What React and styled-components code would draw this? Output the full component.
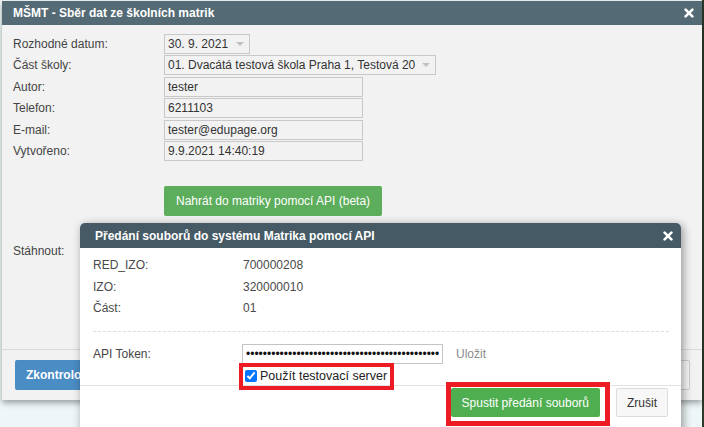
import React from "react";
import styled, { createGlobalStyle } from "styled-components";

const GlobalStyle = createGlobalStyle`
  html, body { margin: 0; padding: 0; }
  body {
    font-family: "Liberation Sans", Arial, sans-serif;
    font-size: 12px;
    background: #eef6f8;
  }
  * { box-sizing: border-box; }
`;

const Page = styled.div`
  position: relative;
  width: 704px;
  height: 427px;
  overflow: hidden;
  padding: 1px 0 0 2px;
  background: linear-gradient(to right, #eef6f8 0, #eef6f8 702px, #2c3a2a 702px);
`;

const OuterDialog = styled.div`
  width: 700px;
  height: 399px;
  display: flex;
  flex-direction: column;
  background: #f2f2f2;
  box-shadow: 0 3px 6px rgba(0, 0, 0, 0.35);
`;

const TitleBar = styled.div`
  height: ${(p) => p.$h}px;
  flex: none;
  display: flex;
  align-items: center;
  justify-content: space-between;
  padding: 0 ${(p) => p.$pr}px 0 ${(p) => p.$pl}px;
  background: ${(p) => p.$bg};
  color: #fff;
  font-weight: bold;
  font-size: 12px;
  border-radius: ${(p) => (p.$round ? "5px 5px 0 0" : "0")};
`;

const CloseIcon = styled.svg`
  width: 10px;
  height: 10px;
  display: block;
`;

const Close = () => (
  <CloseIcon viewBox="0 0 10 10">
    <path d="M1.6 1.6 L8.4 8.4 M8.4 1.6 L1.6 8.4" stroke="#fff" strokeWidth="2.6" strokeLinecap="round" />
  </CloseIcon>
);

const OuterBody = styled.div`
  flex: 1;
  padding: 8.5px 11px 0;
`;

const FormGrid = styled.div`
  display: grid;
  grid-template-columns: 151px auto;
  row-gap: 1.6px;
  align-items: center;
  justify-items: start;
`;

const Label = styled.div`
  color: #444;
  line-height: 20px;
  width: ${(p) => (p.$w ? `${p.$w}px` : "auto")};
  flex: none;
`;

const Field = styled.div`
  width: ${(p) => p.$w}px;
  height: 20px;
  border: 1px solid #c8c8c8;
  padding: 0 5px 0 3px;
  display: flex;
  align-items: center;
  justify-content: space-between;
  color: #333;
  white-space: nowrap;
`;

const Caret = styled.span`
  width: 0;
  height: 0;
  border-left: 4px solid transparent;
  border-right: 4px solid transparent;
  border-top: 4px solid #c2c2c2;
`;

const ButtonRow = styled.div`
  margin-top: 25px;
  padding-left: 151px;
`;

const Button = styled.button`
  height: ${(p) => p.$h || 30}px;
  padding: 0 ${(p) => p.$px || 11}px;
  border: 1px solid ${(p) => p.$border || "transparent"};
  border-radius: 2px;
  background: ${(p) => p.$bg};
  color: ${(p) => p.$color || "#fff"};
  font-family: "Liberation Sans", Arial, sans-serif;
  font-size: 12px;
  font-weight: ${(p) => (p.$bold ? "bold" : "normal")};
  white-space: nowrap;
  cursor: pointer;
`;

const DownloadRow = styled.div`
  margin-top: 25px;
  display: flex;
  align-items: center;
`;

const OuterFooter = styled.div`
  flex: none;
  height: 51px;
  border-top: 1px solid #dadada;
  padding: 0 12px 0 13px;
  display: flex;
  align-items: center;
  justify-content: space-between;
`;

const InnerDialog = styled.div`
  position: absolute;
  left: 80px;
  top: 223px;
  width: 601px;
  height: 230px;
  display: flex;
  flex-direction: column;
  background: #fff;
  border-radius: 5px 5px 0 0;
  box-shadow: 2px 2px 10px rgba(0, 0, 0, 0.4);
`;

const InnerBody = styled.div`
  height: 137px;
  flex: none;
  padding: 6.5px 12px 0 13px;
`;

const InfoGrid = styled.div`
  display: grid;
  grid-template-columns: 150px auto;
  grid-auto-rows: 21.5px;
  align-items: center;
  color: #4a4a4a;
`;

const Dashed = styled.div`
  margin-top: 11.5px;
  border-top: 1px dashed #dcdcdc;
`;

const TokenRow = styled.div`
  margin-top: 12px;
  display: flex;
  align-items: center;
`;

const TokenInput = styled.input`
  width: 201px;
  height: 20px;
  border: 1px solid #c4c4c4;
  padding: 0 3px;
  font-family: "Liberation Sans", Arial, sans-serif;
  font-size: 12px;
  color: #111;
  outline: none;
`;

const SaveLink = styled.span`
  margin-left: 13px;
  color: #8a8a8a;
`;

const CheckRow = styled.label`
  margin-top: 5px;
  padding-left: 152px;
  display: flex;
  align-items: center;
  gap: 3px;
  color: #222;
  font-size: 12.5px;
  height: 14px;
`;

const Check = styled.input`
  margin: 0;
  width: 12px;
  height: 12px;
`;

const InnerFooter = styled.div`
  border-top: 1px solid #e3e3e3;
  padding: 2px 13px 0;
  display: flex;
  justify-content: flex-end;
  gap: 16px;
`;

const Highlight = styled.div`
  position: absolute;
  left: ${(p) => p.$x}px;
  top: ${(p) => p.$y}px;
  width: ${(p) => p.$w}px;
  height: ${(p) => p.$h}px;
  border: ${(p) => p.$b}px solid #ed1c24;
  pointer-events: none;
`;

const formRows = [
  { label: "Rozhodné datum:", value: "30. 9. 2021", w: 86, select: true },
  { label: "Část školy:", value: "01. Dvacátá testová škola Praha 1, Testová 20", w: 272, select: true },
  { label: "Autor:", value: "tester", w: 199 },
  { label: "Telefon:", value: "6211103", w: 199 },
  { label: "E-mail:", value: "tester@edupage.org", w: 199 },
  { label: "Vytvořeno:", value: "9.9.2021 14:40:19", w: 199 },
];

const infoRows = [
  ["RED_IZO:", "700000208"],
  ["IZO:", "320000010"],
  ["Část:", "01"],
];

export default function App() {
  return (
    <>
      <GlobalStyle />
      <Page>
        <OuterDialog>
          <TitleBar $h={24} $pl={11} $pr={8} $bg="#546a74">
            <span>MŠMT - Sběr dat ze školních matrik</span>
            <Close />
          </TitleBar>
          <OuterBody>
            <FormGrid>
              {formRows.map((r) => (
                <React.Fragment key={r.label}>
                  <Label>{r.label}</Label>
                  <Field $w={r.w}>
                    <span>{r.value}</span>
                    {r.select && <Caret />}
                  </Field>
                </React.Fragment>
              ))}
            </FormGrid>
            <ButtonRow>
              <Button $bg="#5cad5c">Nahrát do matriky pomocí API (beta)</Button>
            </ButtonRow>
            <DownloadRow>
              <Label $w={151}>Stáhnout:</Label>
            </DownloadRow>
          </OuterBody>
          <OuterFooter>
            <Button $bg="#4a8cc4" $bold $px={10}>Zkontrolovat data</Button>
            <Button $bg="#f6f6f6" $color="#333" $border="#cfcfcf">Zavřít</Button>
          </OuterFooter>
        </OuterDialog>

        <InnerDialog>
          <TitleBar $h={25} $pl={15} $pr={8} $bg="#455a64" $round>
            <span>Předání souborů do systému Matrika pomocí API</span>
            <Close />
          </TitleBar>
          <InnerBody>
            <InfoGrid>
              {infoRows.map(([l, v]) => (
                <React.Fragment key={l}>
                  <span>{l}</span>
                  <span>{v}</span>
                </React.Fragment>
              ))}
            </InfoGrid>
            <Dashed />
            <TokenRow>
              <Label $w={149}>API Token:</Label>
              <TokenInput type="password" readOnly value={"x".repeat(46)} />
              <SaveLink>Uložit</SaveLink>
            </TokenRow>
            <CheckRow>
              <Check type="checkbox" defaultChecked />
              <span>Použít testovací server</span>
            </CheckRow>
          </InnerBody>
          <InnerFooter>
            <Button $h={29} $px={10} $bg="#4fae4f">Spustit předání souborů</Button>
            <Button $h={29} $px={10} $bg="#f7f7f7" $color="#333" $border="#dcdcdc">Zrušit</Button>
          </InnerFooter>
        </InnerDialog>

        <Highlight $x={239} $y={363} $w={155} $h={27} $b={4} />
        <Highlight $x={446} $y={382} $w={164} $h={44} $b={5} />
      </Page>
    </>
  );
}
